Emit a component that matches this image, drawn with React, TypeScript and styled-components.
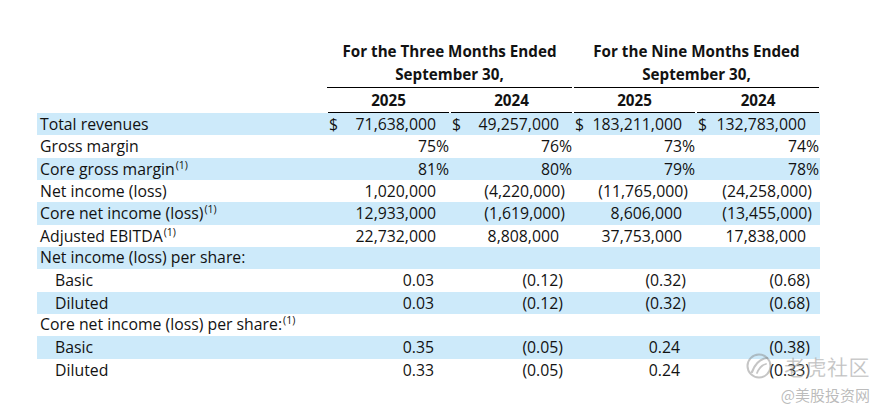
import React from 'react';
import styled, { createGlobalStyle } from 'styled-components';

const GlobalStyle = createGlobalStyle`
  html, body { margin: 0; padding: 0; background: #ffffff; }
  body { font-family: "Open Sans", "Liberation Sans", sans-serif; color: #121212; }
`;

const COLS = '290px 123px 123px 123px 124px';

const Page = styled.div`
  position: relative;
  width: 886px;
  height: 416px;
  overflow: hidden;
  box-sizing: border-box;
  padding: 40px 0 0 37px;
`;

const Table = styled.div`
  width: 783px;
  font-size: 15.8px;
`;

const HeadRow = styled.div`
  display: grid;
  grid-template-columns: ${COLS};
`;

const GroupCell = styled.div`
  grid-column: span 2;
`;

const GroupTitle = styled.div<{ $side: 'l' | 'r' }>`
  margin: ${(p) => (p.$side === 'l' ? '0 1px 0 0' : '0 1px 0 1px')};
  border-bottom: 1px solid #000;
  padding-bottom: 1px;
  text-align: center;
  font-weight: 700;
  font-size: 15.2px;
  line-height: 23px;
`;

const YearCell = styled.div`
  margin: 0 1px;
  border-bottom: 1px solid #000;
  height: 25px;
  display: flex;
  align-items: center;
  justify-content: center;
  font-weight: 700;
  font-size: 15.2px;
  box-sizing: border-box;
  padding-bottom: 1px;
`;

const Row = styled.div<{ $shade: boolean }>`
  display: grid;
  grid-template-columns: ${COLS};
  height: 22.34px;
  background: ${(p) => (p.$shade ? '#cdeafa' : 'transparent')};
`;

const Label = styled.div<{ $indent?: boolean }>`
  display: flex;
  align-items: center;
  padding: 0 0 3px ${(p) => (p.$indent ? '18px' : '3px')};
  white-space: nowrap;
`;

const LabelText = styled.span`
  line-height: 20px;
`;

const Sup = styled.span`
  font-size: 10.5px;
  vertical-align: 6px;
  line-height: 0;
  margin-left: 1px;
`;

const Value = styled.div<{ $pad: number }>`
  display: flex;
  align-items: center;
  justify-content: space-between;
  padding: 0 ${(p) => p.$pad}px 3px 2px;
  white-space: nowrap;
`;

const Watermark = styled.div`
  position: absolute;
  left: 745px;
  top: 352px;
  display: flex;
  flex-direction: column;
  align-items: flex-end;
  pointer-events: none;
  font-family: "Noto Sans CJK SC", sans-serif;
`;

const MarkTop = styled.div`
  display: flex;
  align-items: center;
  gap: 11px;
`;

const MarkTitle = styled.div`
  font-size: 21px;
  line-height: 28px;
  color: rgba(130, 130, 130, 0.5);
  letter-spacing: 0.5px;
  -webkit-text-stroke: 0.3px rgba(255, 255, 255, 0.6);
`;

const MarkSub = styled.div`
  margin-top: 6px;
  font-size: 15px;
  line-height: 18px;
  color: rgba(130, 130, 130, 0.55);
`;

type Kind = 'money' | 'pct' | 'share';

interface RowData {
  label: string;
  sup?: boolean;
  indent?: boolean;
  kind: Kind;
  values: string[];
  dollar?: boolean;
}

const rows: RowData[] = [
  { label: 'Total revenues', kind: 'money', dollar: true, values: ['71,638,000', '49,257,000', '183,211,000', '132,783,000'] },
  { label: 'Gross margin', kind: 'pct', values: ['75%', '76%', '73%', '74%'] },
  { label: 'Core gross margin', sup: true, kind: 'pct', values: ['81%', '80%', '79%', '78%'] },
  { label: 'Net income (loss)', kind: 'money', values: ['1,020,000', '(4,220,000)', '(11,765,000)', '(24,258,000)'] },
  { label: 'Core net income (loss)', sup: true, kind: 'money', values: ['12,933,000', '(1,619,000)', '8,606,000', '(13,455,000)'] },
  { label: 'Adjusted EBITDA', sup: true, kind: 'money', values: ['22,732,000', '8,808,000', '37,753,000', '17,838,000'] },
  { label: 'Net income (loss) per share:', kind: 'money', values: ['', '', '', ''] },
  { label: 'Basic', indent: true, kind: 'share', values: ['0.03', '(0.12)', '(0.32)', '(0.68)'] },
  { label: 'Diluted', indent: true, kind: 'share', values: ['0.03', '(0.12)', '(0.32)', '(0.68)'] },
  { label: 'Core net income (loss) per share:', sup: true, kind: 'money', values: ['', '', '', ''] },
  { label: 'Basic', indent: true, kind: 'share', values: ['0.35', '(0.05)', '0.24', '(0.38)'] },
  { label: 'Diluted', indent: true, kind: 'share', values: ['0.33', '(0.05)', '0.24', '(0.33)'] },
];

const padFor = (kind: Kind, v: string): number => {
  const neg = v.startsWith('(');
  if (kind === 'pct') return 1;
  if (kind === 'share') return neg ? 10 : 16;
  return neg ? 8 : 14;
};

const TigerLogo = () => (
  <svg width="28" height="28" viewBox="0 0 28 28" fill="none">
    <circle cx="14" cy="14" r="11.5" stroke="rgba(140,140,140,0.5)" strokeWidth="2" />
    <path d="M7 20 C10 12, 15 7, 22 6" stroke="rgba(140,140,140,0.5)" strokeWidth="2.2" strokeLinecap="round" />
    <path d="M12 21 C14 16, 17 13, 21 12" stroke="rgba(140,140,140,0.5)" strokeWidth="1.8" strokeLinecap="round" />
  </svg>
);

export default function App() {
  return (
    <Page>
      <GlobalStyle />
      <Table>
        <HeadRow>
          <div />
          <GroupCell>
            <GroupTitle $side="l">
              For the Three Months Ended
              <br />
              September 30,
            </GroupTitle>
          </GroupCell>
          <GroupCell>
            <GroupTitle $side="r">
              For the Nine Months Ended
              <br />
              September 30,
            </GroupTitle>
          </GroupCell>
        </HeadRow>
        <HeadRow>
          <div />
          <YearCell>2025</YearCell>
          <YearCell>2024</YearCell>
          <YearCell>2025</YearCell>
          <YearCell>2024</YearCell>
        </HeadRow>
        {rows.map((r, i) => (
          <Row key={i} $shade={i % 2 === 0}>
            <Label $indent={r.indent}>
              <LabelText>
                {r.label}
                {r.sup && <Sup>(1)</Sup>}
              </LabelText>
            </Label>
            {r.values.map((v, j) => (
              <Value key={j} $pad={padFor(r.kind, v)}>
                <span>{r.dollar ? '$' : ''}</span>
                <span>{v}</span>
              </Value>
            ))}
          </Row>
        ))}
      </Table>
      <Watermark>
        <MarkTop>
          <TigerLogo />
          <MarkTitle>老虎社区</MarkTitle>
        </MarkTop>
        <MarkSub>@美股投资网</MarkSub>
      </Watermark>
    </Page>
  );
}
